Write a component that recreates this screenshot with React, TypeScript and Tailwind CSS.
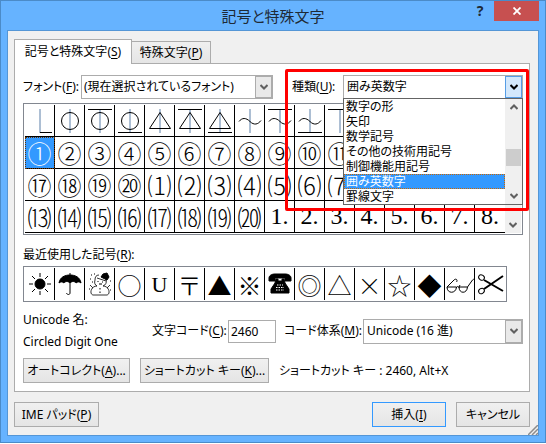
import React, { useState } from 'react';

const DENTISTRY = ['⎿', '⏀', '⏁', '⏂', '⏃', '⏄', '⏅', '⏆', '⏇', '⏈', '⏉', '⏊', '⏋', '⏌', '⏍', '⏎'];

const SYMBOL_ROWS = [
  DENTISTRY,
  ['①', '②', '③', '④', '⑤', '⑥', '⑦', '⑧', '⑨', '⑩', '⑪', '⑫', '⑬', '⑭', '⑮', '⑯'],
  ['⑰', '⑱', '⑲', '⑳', '⑴', '⑵', '⑶', '⑷', '⑸', '⑹', '⑺', '⑻', '⑼', '⑽', '⑾', '⑿'],
  ['⒀', '⒁', '⒂', '⒃', '⒄', '⒅', '⒆', '⒇', '1.', '2.', '3.', '4.', '5.', '6.', '7.', '8.'],
];

const RECENT = ['☀', '☂', '☃', '○', 'U', '〒', '▲', '※', '☎', '◎', '△', '×', '☆', '◆', '👓', '✂'];

const SUBSETS = ['数字の形', '矢印', '数学記号', 'その他の技術用記号', '制御機能用記号', '囲み英数字', '罫線文字'];

const circle = <circle cx="12" cy="12" r="8.5" />;
const triangle = <path d="M12 3.500L1.500 19.500h21z" />;
const wave = <path d="M1 12.500C4 8.500 8 8.500 12 12.500S20 15.500 23 11.500" />;
const stem = <path d="M12 0v24" stroke="#5b7fa8" />;
const topLine = <path d="M0 .5h24" />;
const bottomLine = <path d="M0 23.500h24" />;

const DRAWINGS: Record<string, React.ReactNode> = {
  '⎿': (
    <>
      <path d="M12 0v24" stroke="#5b7fa8" />
      <path d="M12 23.500h12" />
    </>
  ),
  '⏀': <>{stem}{circle}</>,
  '⏁': <>{stem}{circle}{topLine}</>,
  '⏂': <>{stem}{circle}{bottomLine}</>,
  '⏃': <>{stem}{triangle}</>,
  '⏄': <>{stem}{triangle}{topLine}</>,
  '⏅': <>{stem}{triangle}{bottomLine}</>,
  '⏆': <>{stem}{wave}</>,
  '⏇': <>{stem}{wave}{topLine}</>,
  '⏈': <>{stem}{wave}{bottomLine}</>,
  '⏉': <>{stem}{topLine}</>,
  '⏊': <>{stem}{bottomLine}</>,
  '⏋': <path d="M0 .5h12V24" />,
  '⏌': <path d="M12 0v23.500H0" />,
  '⏍': <path d="M3 5h18v14H3z" />,
  '⏎': <path d="M20 5v9H5m5-5l-5 5 5 5" />,
  '☀': (
    <>
      <circle cx="12" cy="12" r="5" fill="currentColor" />
      <path d="M12 1v4M12 19v4M1 12h4M19 12h4M4 4l3 3M17 17l3 3M4 20l3-3M17 7l3-3" />
    </>
  ),
  '☂': (
    <>
      <path
        d="M1 11C2 5 7 3 12 3s10 2 11 8c-1.500-1.500-3.500-1.500-5 0-1.500-2-4-2-6 0-2-2-4.500-2-6 0-1.500-1.500-3.500-1.500-5 0z"
        fill="currentColor"
      />
      <path d="M12 1v20c0 2-3 2-3.500 0" />
    </>
  ),
  '☃': (
    <>
      <path d="M13 5l2-3 4-1 2 4-2 3z" fill="currentColor" />
      <path
        d="M11 3c-3 0-4 2-4 5-1 3 0 5 2 6-6 0-8 8-4 9h14c4-1 2-9-4-9 3-1 4-4 3-7M9 6l9 3"
        strokeWidth=".8"
      />
      <path d="M9.500 9.500h1M14 10h1M11 12h3M12 16v1.500M12 19.500V21" />
      <path d="M2 13l3 3M22 13l-3 3" strokeWidth=".8" />
      <path d="M3 3h1M6 2h1M2 7h1M4 10h1M22 9h1M1 17h1M22 18h1" />
    </>
  ),
  '☎': (
    <>
      <path
        d="M1 9V6c0-2 2-4 6-4h10c4 0 6 2 6 4v3h-6V6H7v3zM8 7h2v2h4V7h2l1 4 4 6v4H3v-4l4-6z"
        fill="currentColor"
      />
      <path d="M9 13h6M8 15.500h8M8 18h8" stroke="white" strokeDasharray="1.500 1" />
    </>
  ),
  '👓': (
    <>
      <path d="M-1 15h9.500M11 15h8.500M-1 15c0 7 9 7 9.500 0M11 15c0 7 8 7 8.500 0M8.500 16c0-2 2.500-2 2.500 0" />
      <path d="M-1 15l7-7c2-2 4 0 2.500 2M11 15l1-2M19.500 15l5-7c1-1 2-1 2 0" />
    </>
  ),
  '✂': (
    <>
      <path d="M6 8L25 19M6 17L25 4" strokeWidth="2" />
      <ellipse cx="3.500" cy="5.500" rx="3" ry="2.500" transform="rotate(35 3.500 5.500)" />
      <ellipse cx="3.500" cy="19" rx="3" ry="2.500" transform="rotate(-35 3.500 19)" />
    </>
  ),
};

const glyphClass = (symbol: string) => {
  if (symbol === 'U') {
    return "font-['Liberation_Serif',serif] text-[22px]";
  }
  if (symbol.endsWith('.')) {
    return "font-['Liberation_Serif',serif] text-2xl/[31px]";
  }
  return "font-['Noto_Sans_CJK_JP',sans-serif] text-2xl/[31px] font-light [font-feature-settings:normal]";
};

const Symbol: React.FC<{ symbol: string }> = ({ symbol }) =>
  DRAWINGS[symbol] ? (
    <svg
      className="mx-auto block size-6 overflow-visible"
      viewBox="0 0 24 24"
      fill="none"
      stroke="currentColor"
      role="img"
      aria-label={symbol}
    >
      {DRAWINGS[symbol]}
    </svg>
  ) : (
    <span className={`block h-[31px] leading-[31px] ${glyphClass(symbol)}`}>{symbol}</span>
  );

const Chevron: React.FC<{ up?: boolean; className?: string }> = ({ up, className = 'text-[#606060]' }) => (
  <svg className={`size-2 ${className}`} viewBox="0 0 8 8" fill="none" stroke="currentColor" strokeWidth="2">
    <path d={up ? 'M.5 6L4 2.500 7.500 6' : 'M.5 2L4 5.500 7.500 2'} />
  </svg>
);

const Key: React.FC<{ k: string; colon?: boolean }> = ({ k, colon }) => (
  <>
    (<u className="underline-offset-2">{k}</u>){colon && ':'}
  </>
);

const buttonClass =
  'flex h-[25px] items-center justify-center border bg-linear-to-b from-[#f0f0f0] to-[#e5e5e5] whitespace-nowrap';

const DropButton: React.FC<{ open?: boolean }> = ({ open }) => (
  <span
    className={`pointer-events-none flex w-[17px] items-center justify-center border ${
      open ? 'border-[#569de5] bg-[#d3e8fc]' : 'border-[#acacac] bg-[#e9e9e9]'
    }`}
  >
    <Chevron className={open ? 'text-black' : 'text-[#606060]'} />
  </span>
);

const App: React.FC = () => {
  const [selected, setSelected] = useState('①');
  const [subset, setSubset] = useState('囲み英数字');
  const [code, setCode] = useState('2460');

  return (
    <main className="w-full border border-[#4b8bc8] bg-[#66b3ff] px-1.5 pb-1.5 font-['Noto_Sans','Noto_Sans_CJK_JP',sans-serif] text-xs leading-4 text-black [font-feature-settings:'palt']">
      {/* Title bar */}
      <header className="relative flex h-[29px] items-center justify-center">
        <h1 className="text-[15px] leading-5 text-[#1e2a36]">記号と特殊文字</h1>
        <div className="absolute top-0 right-0 flex h-5 items-stretch">
          <button type="button" className="w-7 text-sm font-bold text-[#1e2a36]" aria-label="ヘルプ">
            ?
          </button>
          <button
            type="button"
            className="flex w-[45px] items-center justify-center bg-[#c75050] text-white"
            aria-label="閉じる"
          >
            <svg className="size-2" viewBox="0 0 8 8" stroke="currentColor" strokeWidth="1.800">
              <path d="M.5 .5l7 7M7.500 .5l-7 7" />
            </svg>
          </button>
        </div>
      </header>

      <div className="relative border border-[#5496d6] bg-[#f0f0f0] pt-2 pr-2 pb-2 pl-1.5">
        {/* Tabs */}
        <div role="tablist" className="flex h-6 items-end">
          <button
            type="button"
            role="tab"
            aria-selected="true"
            className="relative z-10 -mb-px h-[25px] w-[118px] border border-b-0 border-[#acacac] bg-white"
          >
            記号と特殊文字
            <Key k="S" />
          </button>
          <button
            type="button"
            role="tab"
            aria-selected="false"
            className="-ml-px h-[22px] w-20 border border-b-0 border-[#acacac] bg-linear-to-b from-[#f0f0f0] to-[#e5e5e5]"
          >
            特殊文字
            <Key k="P" />
          </button>
        </div>

        <section className="border border-[#acacac] bg-white pt-[11px] pr-1.5 pb-2 pl-2">
          {/* Font and subset */}
          <div className="flex items-center justify-between">
            <div className="flex items-center">
              <label htmlFor="font" className="w-[58px]">
                フォント
                <Key k="F" colon />
              </label>
              <div className="flex h-6 w-48 border border-[#acacac] bg-white">
                <select id="font" className="min-w-0 flex-1 appearance-none pl-0.5 outline-none">
                  <option>(現在選択されているフォント)</option>
                </select>
                <DropButton />
              </div>
            </div>
            <div className="relative flex items-center">
              <label htmlFor="subset" className="w-[51px]">
                種類
                <Key k="U" colon />
              </label>
              <div className="relative flex h-6 w-[180px] border border-[#acacac] bg-white">
                <select
                  id="subset"
                  className="min-w-0 flex-1 appearance-none pl-[3px] outline-none"
                  value={subset}
                  onChange={(e) => setSubset(e.target.value)}
                >
                  {SUBSETS.map((name) => (
                    <option key={name}>{name}</option>
                  ))}
                </select>
                <DropButton open />
                <div className="absolute -inset-x-px top-full z-10 flex border border-[#646464] bg-white">
                  <ul role="listbox" aria-label="種類" className="flex-1">
                    {SUBSETS.map((name) => (
                      <li
                        key={name}
                        role="option"
                        aria-selected={name === subset}
                        onClick={() => setSubset(name)}
                        className={`h-[15px] pl-0.5 leading-[15px] ${
                          name === subset
                            ? 'bg-[#3399ff] text-white outline outline-dotted -outline-offset-1 outline-[#cc6600]'
                            : ''
                        }`}
                      >
                        {name}
                      </li>
                    ))}
                  </ul>
                  <div className="flex w-[17px] flex-col items-center justify-between bg-[#f0f0f0] py-1">
                    <Chevron up />
                    <span className="mt-3 h-[17px] w-[15px] bg-[#cdcdcd]" />
                    <Chevron />
                  </div>
                </div>
              </div>
              {/* Highlight frame */}
              <div className="pointer-events-none absolute -top-1.5 -right-1.5 -left-[7px] z-20 h-[142px] rounded-xs border-3 border-[#ff0000]" />
            </div>
          </div>

          {/* Symbol grid */}
          <div className="mt-1 flex border border-[#828790] p-px">
            <table className="flex-1 table-fixed border-separate border-spacing-0">
              <tbody>
                {SYMBOL_ROWS.map((row) => (
                  <tr key={row[0]}>
                    {row.map((symbol) => (
                      <td
                        key={symbol}
                        onClick={() => setSelected(symbol)}
                        className={`h-8 w-[30px] border-r border-b border-black p-0 text-center last:border-r-0 ${
                          symbol === selected
                            ? 'bg-[#3399ff] text-white outline outline-dotted -outline-offset-1 outline-[#663300]'
                            : ''
                        }`}
                      >
                        <Symbol symbol={symbol} />
                      </td>
                    ))}
                  </tr>
                ))}
              </tbody>
            </table>
            <div className="flex w-4 flex-col items-center justify-between bg-[#f0f0f0] py-1">
              <Chevron up />
              <Chevron />
            </div>
          </div>

          {/* Recently used */}
          <h2 className="mt-3 h-4">
            最近使用した記号
            <Key k="R" colon />
          </h2>
          <div className="mt-[3px] mr-4 border border-[#828790] p-px">
            <table className="w-full table-fixed border-separate border-spacing-0">
              <tbody>
                <tr>
                  {RECENT.map((symbol) => (
                    <td key={symbol} className="h-8 border-r border-black p-0 text-center last:border-r-0">
                      <Symbol symbol={symbol} />
                    </td>
                  ))}
                </tr>
              </tbody>
            </table>
          </div>

          {/* Character details */}
          <div className="mt-2.5 flex items-center">
            <div className="flex w-[129px] flex-col gap-1.5">
              <span>Unicode 名:</span>
              <span>Circled Digit One</span>
            </div>
            <label htmlFor="code" className="w-[76px]">
              文字コード
              <Key k="C" colon />
            </label>
            <input
              id="code"
              className="h-[23px] w-12 border border-[#acacac] bg-white pl-0.5 outline-none"
              value={code}
              onChange={(e) => setCode(e.target.value)}
            />
            <label htmlFor="system" className="ml-2 w-[79px]">
              コード体系
              <Key k="M" colon />
            </label>
            <div className="flex h-[25px] min-w-0 flex-1 border border-[#acacac] bg-white">
              <select id="system" className="min-w-0 flex-1 appearance-none pl-[3px] outline-none">
                <option>Unicode (16 進)</option>
              </select>
              <DropButton />
            </div>
          </div>

          <div className="mt-2 flex items-center gap-2.5">
            <button type="button" className={`${buttonClass} w-[107px] border-[#acacac]`}>
              オートコレクト
              <Key k="A" />
              ...
            </button>
            <button type="button" className={`${buttonClass} w-[129px] border-[#acacac]`}>
              ショートカット キー
              <Key k="K" />
              ...
            </button>
            <span>ショートカット キー : 2460, Alt+X</span>
          </div>
        </section>

        {/* Footer */}
        <footer className="mt-2.5 flex gap-2.5">
          <button type="button" className={`${buttonClass} mr-auto w-[85px] border-[#acacac]`}>
            IME パッド
            <Key k="P" />
          </button>
          <button type="button" className={`${buttonClass} w-[74px] border-[#3399ff]`}>
            挿入
            <Key k="I" />
          </button>
          <button type="button" className={`${buttonClass} w-[74px] border-[#acacac]`}>
            キャンセル
          </button>
        </footer>
        <svg
          className="absolute right-0 bottom-0 size-2.5"
          viewBox="0 0 10 10"
          stroke="#8c8c8c"
          strokeWidth="1.500"
          aria-hidden="true"
        >
          <path d="M0 10L10 0M4 10L10 4M8 10L10 8" />
        </svg>
      </div>
    </main>
  );
};

export default App;
